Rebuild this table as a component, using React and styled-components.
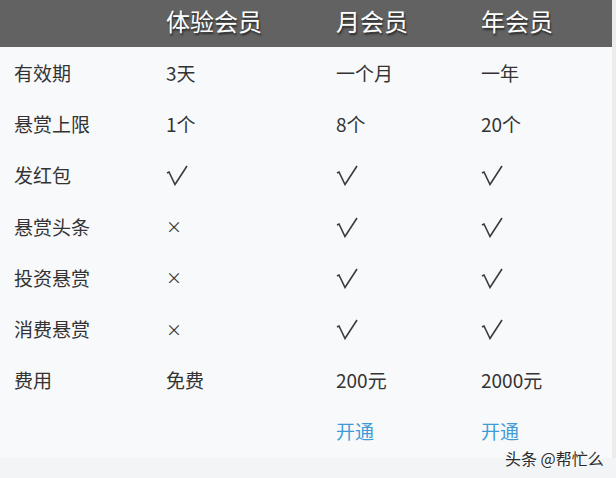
import React from "react";
import styled, { createGlobalStyle } from "styled-components";

const GlobalStyle = createGlobalStyle`
  html, body {
    margin: 0;
    padding: 0;
    background: #f3f4f6;
    font-family: "Noto Sans CJK SC", "Noto Sans", sans-serif;
  }
`;

const rows = [
  ["有效期", "3天", "一个月", "一年"],
  ["悬赏上限", "1个", "8个", "20个"],
  ["发红包", "√", "√", "√"],
  ["悬赏头条", "×", "√", "√"],
  ["投资悬赏", "×", "√", "√"],
  ["消费悬赏", "×", "√", "√"],
  ["费用", "免费", "200元", "2000元"],
];

function Check() {
  return (
    <CheckMark viewBox="0 0 22 21" aria-label="√">
      <polyline points="1,8 3,7 9,19.5 21,1" />
    </CheckMark>
  );
}

function App() {
  return (
    <Page>
      <GlobalStyle />
      <Table>
        <HeaderRow>
          <HeadCell />
          <HeadCell>体验会员</HeadCell>
          <HeadCell>月会员</HeadCell>
          <HeadCell>年会员</HeadCell>
        </HeaderRow>
        {rows.map((r) => (
          <Row key={r[0]}>
            {r.map((c, i) => (
              <Cell key={i} $small={c === "×"}>
                {c === "√" ? <Check /> : c}
              </Cell>
            ))}
          </Row>
        ))}
        <Row>
          <Cell />
          <Cell />
          <Link>开通</Link>
          <Link>开通</Link>
        </Row>
      </Table>
      <Footer />
      <Watermark>头条 @帮忙么</Watermark>
    </Page>
  );
}

const Page = styled.div`
  position: relative;
  width: 616px;
  height: 478px;
  overflow: hidden;
  background: #ececec;
`;

const Table = styled.div`
  width: 612px;
  background: #f8f9fb;
`;

const grid = `
  display: grid;
  grid-template-columns: 152px 170px 145px 1fr;
  padding-left: 14px;
  align-items: center;
`;

const HeaderRow = styled.div`
  ${grid}
  height: 47px;
  background: #626262;
  margin-bottom: 1px;
`;

const HeadCell = styled.div`
  color: #ffffff;
  font-size: 24px;
  line-height: 1;
  padding-bottom: 5px;
  text-shadow: 1px 2px 2px rgba(0, 0, 0, 0.6);
`;

const Row = styled.div`
  ${grid}
  height: 51.2px;
`;

const Cell = styled.div`
  display: flex;
  align-items: center;
  color: #333333;
  font-size: ${(p) => (p.$small ? "16px" : "19px")};
  line-height: 1;
  padding-bottom: 2px;
`;

const CheckMark = styled.svg`
  width: 22px;
  height: 21px;
  margin-top: 2px;
  fill: none;
  stroke: #3a3a3a;
  stroke-width: 1.6;
  stroke-linejoin: miter;
`;

const Link = styled(Cell)`
  color: #3f9bd6;
`;

const Footer = styled.div`
  height: 22px;
  background: #f3f4f6;
`;

const Watermark = styled.div`
  position: absolute;
  left: 505px;
  top: 446px;
  font-size: 16px;
  color: #2b2b2b;
  text-shadow: 0 0 2px #ffffff;
`;

export default App;
